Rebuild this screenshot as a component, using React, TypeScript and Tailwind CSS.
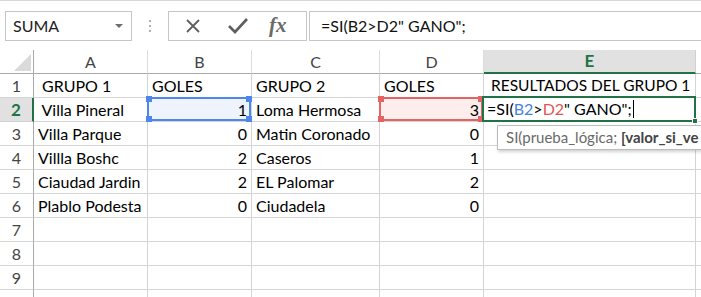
import React from "react";

type Row = string[];

const rows: Row[] = [
  ["\u00a0GRUPO 1", "GOLES", "GRUPO 2", "GOLES", "\u00a0RESULTADOS DEL GRUPO 1"],
  ["\u00a0Villa Pineral", "1", "Loma Hermosa", "3", ""],
  ["Villa Parque", "0", "Matin Coronado", "0", ""],
  ["Villla Boshc", "2", "Caseros", "1", ""],
  ["Ciaudad Jardin", "2", "EL Palomar", "2", ""],
  ["Plablo Podesta", "0", "Ciudadela", "0", ""],
  ["", "", "", "", ""],
  ["", "", "", "", ""],
  ["", "", "", "", ""],
  ["", "", "", "", ""],
];

const cols = ["A", "B", "C", "D", "E"];
const numCols = [1, 3];

function Handles({ color }: { color: string }) {
  return (
    <>
      <span className={`absolute -left-[3px] -top-[3px] h-[6px] w-[6px] ${color}`} />
      <span className={`absolute -right-[3px] -top-[3px] h-[6px] w-[6px] ${color}`} />
      <span className={`absolute -left-[3px] -bottom-[3px] h-[6px] w-[6px] ${color}`} />
      <span className={`absolute -right-[3px] -bottom-[3px] h-[6px] w-[6px] ${color}`} />
    </>
  );
}

export default function App() {
  return (
    <div className="relative h-[297px] w-[701px] overflow-hidden bg-white font-['Lato',sans-serif] text-[16px] text-black">
      {/* barra de fórmulas */}
      <div className="flex h-[50px] items-start border-t border-[#d6d6d6] pt-[10px]">
        <div className="ml-[5px] flex h-[30px] w-[127px] items-center justify-between border border-[#c6c6c6] pl-[7px] pr-[8px]">
          <span className="text-[16px] text-[#222]">SUMA</span>
          <span className="h-0 w-0 border-x-[4px] border-t-[4px] border-x-transparent border-t-[#6d6d6d]" />
        </div>
        <div className="ml-[17px] mt-[9px] flex flex-col gap-[3px]">
          <span className="h-[2px] w-[2px] bg-[#b0b0b0]" />
          <span className="h-[2px] w-[2px] bg-[#b0b0b0]" />
          <span className="h-[2px] w-[2px] bg-[#b0b0b0]" />
        </div>
        <div className="ml-[17px] flex h-[30px] w-[139px] items-center border border-[#c6c6c6]">
          <svg width="20" height="20" viewBox="0 0 20 20" className="ml-[14px]">
            <path d="M4 4 L16 16 M16 4 L4 16" stroke="#5f5f5f" strokeWidth="1.8" fill="none" />
          </svg>
          <svg width="22" height="20" viewBox="0 0 22 20" className="ml-[24px]">
            <path d="M2 10 L8 16 L20 3" stroke="#5f5f5f" strokeWidth="2.6" fill="none" />
          </svg>
          <span className="ml-[20px] font-['Liberation_Serif',serif] text-[21px] font-bold italic text-[#6a6a6a]">fx</span>
        </div>
        <div className="ml-[2px] flex h-[30px] flex-1 items-center border border-r-0 border-[#c6c6c6] pl-[11px]">
          <span className="text-[16px] text-[#111]">=SI(B2&gt;D2" GANO";</span>
        </div>
      </div>

      {/* hoja */}
      <div className="grid grid-cols-[34px_114px_104px_128px_104px_212px_1fr] grid-rows-[24px_repeat(10,24px)]">
        <div className="relative border-b border-r border-[#a9a9a9]">
          <span className="absolute bottom-[2px] right-[2px] h-0 w-0 border-b-[17px] border-l-[17px] border-b-[#dadada] border-l-transparent" />
        </div>
        {cols.map((c) =>
          c === "E" ? (
            <div
              key={c}
              className="flex items-center justify-center border-b-2 border-r border-b-[#217346] border-r-[#d0d0d0] bg-[#e1e1e1] text-[17px] font-bold text-[#217346]"
            >
              E
            </div>
          ) : (
            <div
              key={c}
              className="flex items-center justify-center border-b border-r border-b-[#a9a9a9] border-r-[#dcdcdc] text-[#444]"
            >
              {c}
            </div>
          )
        )}
        <div className="border-b border-[#a9a9a9]" />

        {rows.map((row, r) => (
          <React.Fragment key={r}>
            {r === 1 ? (
              <div className="flex items-center justify-center border-b border-r-2 border-b-[#d0d0d0] border-r-[#217346] bg-[#e1e1e1] text-[17px] font-bold text-[#217346]">
                2
              </div>
            ) : (
              <div className="flex items-center justify-center border-b border-r border-b-[#d4d4d4] border-r-[#a9a9a9] text-[#444]">
                {r < 9 ? r + 1 : ""}
              </div>
            )}
            {row.map((val, c) => {
              const isNum = numCols.includes(c) && r > 0;
              return (
                <div
                  key={c}
                  className={`relative flex items-center whitespace-pre border-b border-r border-[#d4d4d4] px-[4px] ${
                    isNum ? "justify-end" : "justify-start"
                  } ${r === 0 && c === 4 ? "pl-[3px] text-[15.5px]" : ""}`}
                >
                  {r === 1 && c === 1 && (
                    <div className="absolute -left-px -top-px bottom-0 right-0 border-2 border-[#4f86ec] bg-[#eef3fd]">
                      <Handles color="bg-[#4f86ec]" />
                    </div>
                  )}
                  {r === 1 && c === 3 && (
                    <div className="absolute -left-px -top-px bottom-0 right-0 border-2 border-[#e46464] bg-[#fdeded]">
                      <Handles color="bg-[#e46464]" />
                    </div>
                  )}
                  {r === 1 && c === 4 ? (
                    <div className="absolute -left-[2px] -top-[2px] -bottom-[1px] -right-[1px] z-10 flex items-center border-2 border-[#217346] bg-white pl-[3px]">
                      <span>=SI(</span>
                      <span className="text-[#4a7fe3]">B2</span>
                      <span>&gt;</span>
                      <span className="text-[#e25555]">D2</span>
                      <span>" GANO";</span>
                      <span className="ml-px h-[18px] w-px bg-black" />
                      <span className="absolute -bottom-[4px] -right-[4px] h-[6px] w-[6px] border border-white bg-[#217346]" />
                    </div>
                  ) : (
                    <span className="relative">{val}</span>
                  )}
                </div>
              );
            })}
            <div className="border-b border-[#d4d4d4]" />
          </React.Fragment>
        ))}
      </div>

      {/* ayuda de la función */}
      <div className="absolute left-[497px] top-[125px] z-20 flex h-[25px] w-[204px] items-center overflow-hidden whitespace-pre border border-r-0 border-[#bcbcbc] bg-white pl-[8px] text-[15px] text-[#6a6a6a] shadow-[1px_2px_3px_rgba(0,0,0,0.18)]">
        SI(prueba_lógica; <span className="font-bold text-[#444]">[valor_si_ve</span>
      </div>
    </div>
  );
}
